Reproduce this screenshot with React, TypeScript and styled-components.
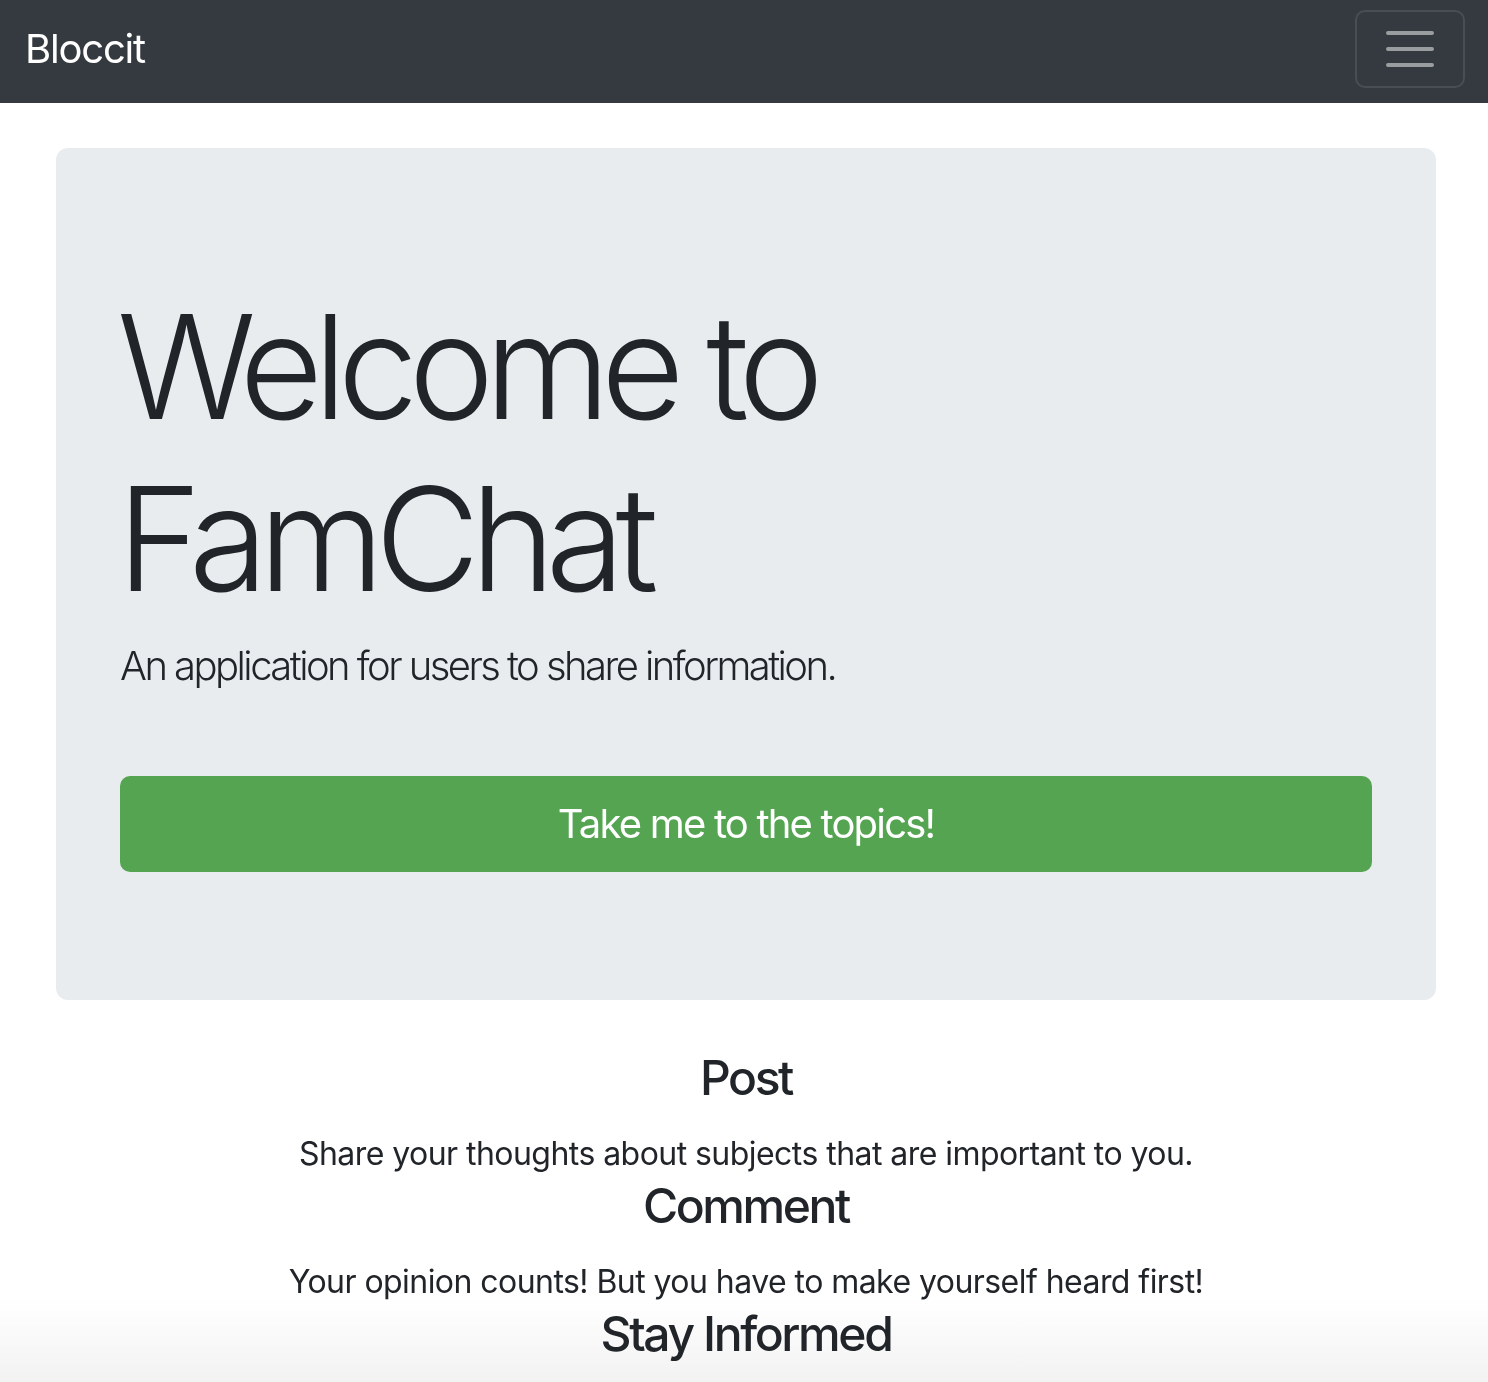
import React from "react";
import styled, { createGlobalStyle } from "styled-components";

const GlobalStyle = createGlobalStyle`
  html {
    background: #fff;
  }
  html, body {
    margin: 0;
    padding: 0;
  }
  body {
    font-family: Inter, "Liberation Sans", sans-serif;
    color: #212529;
  }
  * {
    box-sizing: border-box;
  }
`;

const Navbar = styled.nav`
  height: 103px;
  padding: 0 23px 0 25px;
  display: flex;
  align-items: center;
  justify-content: space-between;
  background-color: #343a40;
`;

const Brand = styled.a`
  font-size: 40px;
  line-height: 60px;
  font-weight: 400;
  color: #fff;
  text-decoration: none;
  letter-spacing: -1.2px;
  margin-top: -6px;
`;

const Toggler = styled.button`
  width: 110px;
  height: 78px;
  margin-top: -6px;
  display: flex;
  align-items: center;
  justify-content: center;
  background: transparent;
  border: 2px solid rgba(255, 255, 255, 0.1);
  border-radius: 10px;
  padding: 0;
`;

const Main = styled.main`
  padding: 45px 52px 0 56px;
`;

const Jumbotron = styled.section`
  background-color: #e9ecef;
  border-radius: 12px;
  padding: 128px 64px;
  margin-bottom: 48px;
`;

const Display = styled.h1`
  margin: 5px 0 11px -3px;
  font-size: 144px;
  line-height: 172px;
  font-weight: 300;
  letter-spacing: -9.4px;
`;

const Lead = styled.p`
  margin: 0 0 80px;
  font-size: 40px;
  line-height: 60px;
  font-weight: 300;
  letter-spacing: -2.55px;
`;

const Button = styled.a`
  display: block;
  width: 100%;
  height: 96px;
  line-height: 96px;
  text-align: center;
  background-color: #54a451;
  color: #fff;
  border-radius: 10px;
  font-size: 40px;
  font-weight: 400;
  letter-spacing: -1.8px;
  text-decoration: none;
`;

const Features = styled.div`
  text-align: center;
`;

const FeatureTitle = styled.h4`
  margin: 0 0 22px;
  font-size: 48px;
  line-height: 60px;
  font-weight: 500;
  letter-spacing: -2.4px;
`;

const FeatureText = styled.p`
  margin: 0 0 -2px;
  font-size: 32px;
  line-height: 48px;
  font-weight: 400;
  letter-spacing: -0.55px;
`;

const Fade = styled.div`
  position: fixed;
  z-index: -1;
  left: 0;
  right: 0;
  bottom: 0;
  height: 82px;
  background: linear-gradient(rgba(242, 242, 242, 0), rgba(242, 242, 242, 1));
  pointer-events: none;
`;

const features = [
  { title: "Post", text: "Share your thoughts about subjects that are important to you." },
  { title: "Comment", text: "Your opinion counts! But you have to make yourself heard first!" },
  { title: "Stay Informed", text: "Keep up with what your family is talking about." },
];

const MenuIcon = () => (
  <svg width="60" height="60" viewBox="0 0 30 30">
    <path
      d="M4 7h22M4 15h22M4 23h22"
      stroke="rgba(255,255,255,0.5)"
      strokeWidth="2"
      strokeLinecap="round"
      strokeMiterlimit="10"
    />
  </svg>
);

export default function App() {
  return (
    <>
      <GlobalStyle />
      <Fade />
      <Navbar>
        <Brand href="#">Bloccit</Brand>
        <Toggler aria-label="Toggle navigation">
          <MenuIcon />
        </Toggler>
      </Navbar>
      <Main>
        <Jumbotron>
          <Display>
            Welcome to
            <br />
            FamChat
          </Display>
          <Lead>An application for users to share information.</Lead>
          <Button href="#">Take me to the topics!</Button>
        </Jumbotron>
        <Features>
          {features.map((f) => (
            <div key={f.title}>
              <FeatureTitle>{f.title}</FeatureTitle>
              <FeatureText>{f.text}</FeatureText>
            </div>
          ))}
        </Features>
      </Main>
    </>
  );
}
